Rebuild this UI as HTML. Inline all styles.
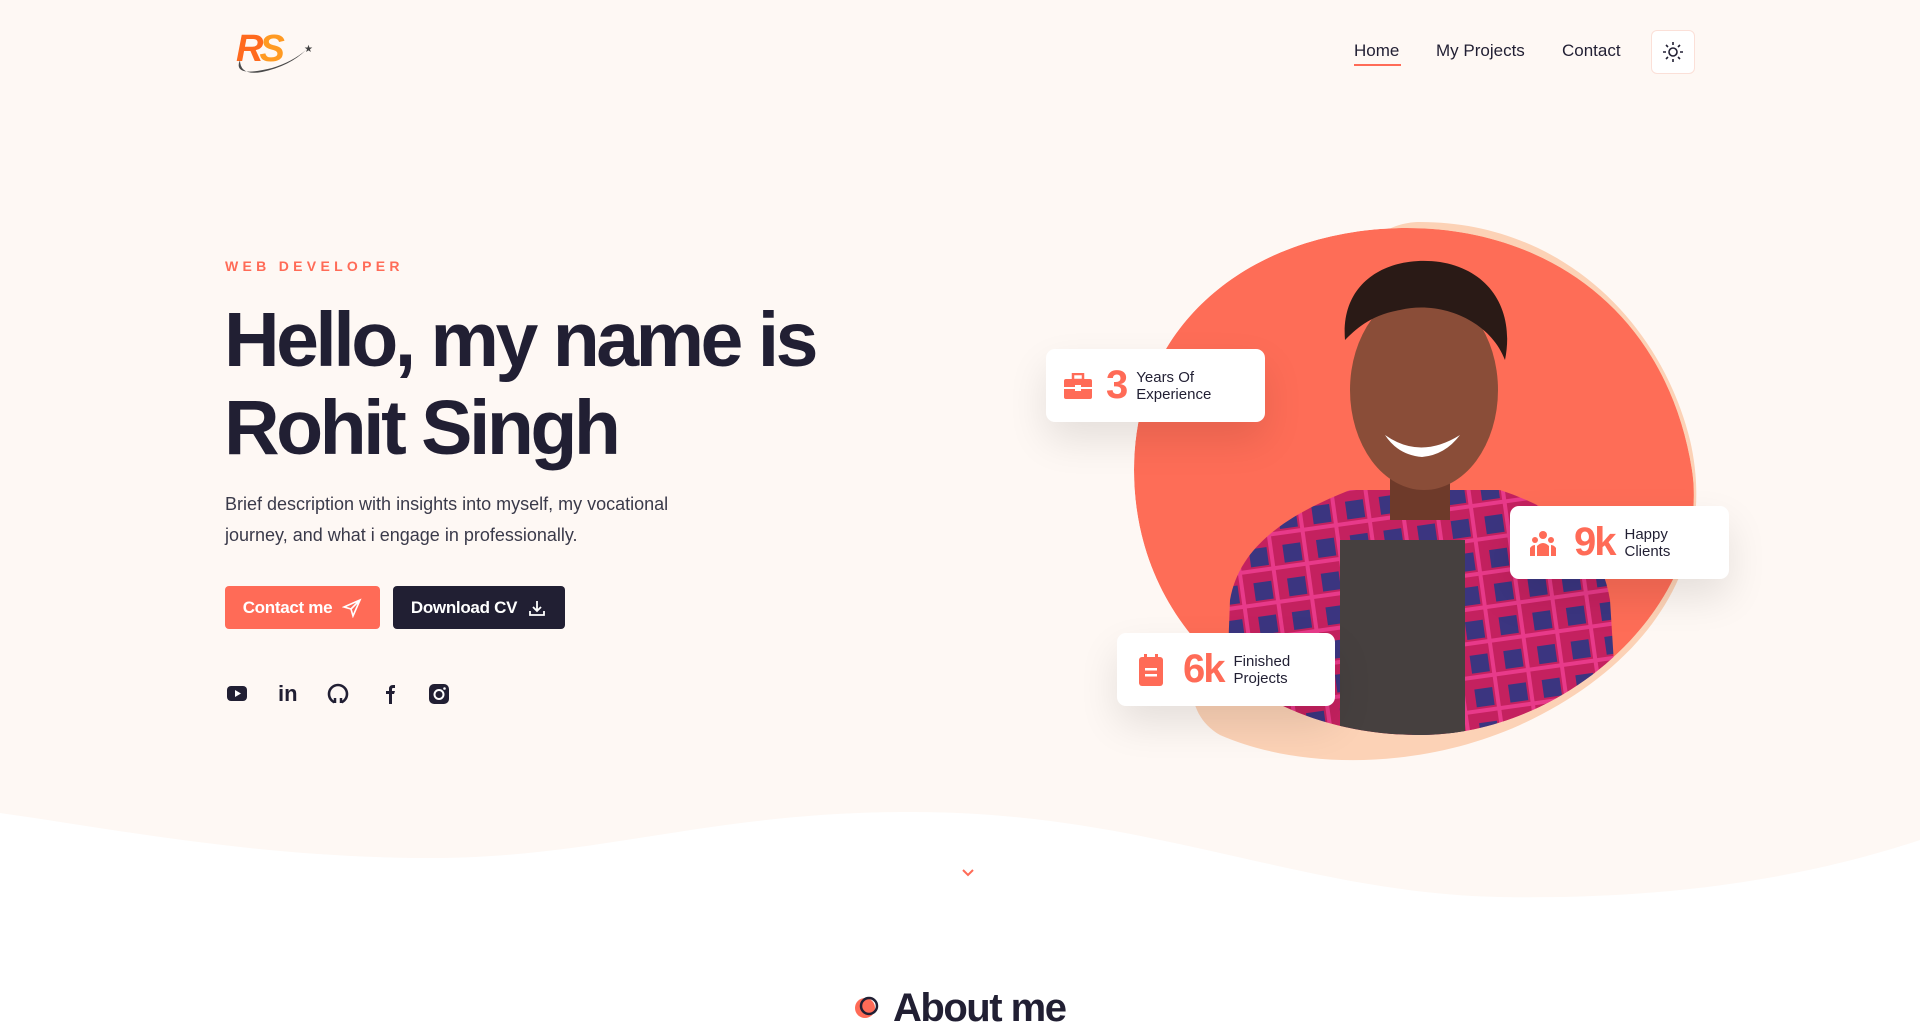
<!DOCTYPE html>
<html><head><meta charset="utf-8"><style>
*{margin:0;padding:0;box-sizing:border-box}
body{width:1920px;height:1024px;overflow:hidden;background:#fff;font-family:"Liberation Sans",sans-serif;color:#211f33;position:relative}
.abs{position:absolute}
.nav a{position:absolute;top:41px;font-size:17px;color:#211f33;text-decoration:none}
.card{position:absolute;background:#fff;border-radius:9px;box-shadow:0 18px 40px rgba(0,0,0,.10);display:flex;align-items:center}
.card .n{color:#ff6b57;font-size:40px;font-weight:bold;letter-spacing:-2px;margin-right:10px}
.card .t{font-size:15px;line-height:17px;color:#211f33}
.btn{position:absolute;top:586px;height:43px;border-radius:4px;color:#fff;font-size:17px;font-weight:bold;display:flex;align-items:center;justify-content:center;gap:10px;letter-spacing:-.3px}
</style></head><body>
<svg class="abs" style="left:0;top:0" width="1920" height="1024">
<path d="M0,0H1920V840C1800,880 1660,900 1500,897C1300,893 1150,812 912,812C700,812 600,860 416,858C250,856 120,830 0,813Z" fill="#fef8f4"/>
<path d="M1420,222C1560,222 1660,320 1690,440C1720,570 1640,670 1520,725C1420,770 1300,770 1220,735C1160,700 1200,600 1300,500C1300,380 1330,222 1420,222Z" fill="#fcd2b6"/>
<defs><clipPath id="bl"><path d="M1380,229C1530,218 1665,300 1692,470C1712,600 1570,735 1420,735C1250,735 1134,620 1134,470C1134,330 1240,240 1380,229Z"/></clipPath>
<pattern id="pl" width="34" height="34" patternUnits="userSpaceOnUse" patternTransform="rotate(-8)"><rect width="34" height="34" fill="#c4215f"/><rect x="4" y="4" width="18" height="18" fill="#3b3580"/><rect x="24" y="0" width="4" height="34" fill="#e83a8a"/><rect x="0" y="24" width="34" height="4" fill="#e83a8a"/></pattern></defs>
<g clip-path="url(#bl)">
<path d="M1380,229C1530,218 1665,300 1692,470C1712,600 1570,735 1420,735C1250,735 1134,620 1134,470C1134,330 1240,240 1380,229Z" fill="#fe6d57"/>
<path d="M1224,760L1230,600C1240,540 1300,510 1350,490L1500,490C1560,510 1600,540 1610,600L1620,760Z" fill="url(#pl)"/>
<path d="M1340,540L1465,540L1465,760L1340,760Z" fill="#46403f"/>
<rect x="1390" y="450" width="60" height="70" fill="#6e3a2a"/>
<ellipse cx="1424" cy="390" rx="74" ry="100" fill="#8a4d38"/>
<path d="M1345,340C1340,280 1390,255 1440,262C1490,270 1515,310 1505,360C1490,320 1440,300 1400,310C1370,315 1355,330 1345,340Z" fill="#2a1a16"/>
<path d="M1385,435Q1420,460 1460,435Q1445,455 1422,457Q1398,455 1385,435Z" fill="#fff"/>
</g>
<path d="M963,870l5,5l5,-5" stroke="#ff6b57" stroke-width="2" fill="none"/>
<circle cx="865" cy="1008" r="10" fill="#ff6b57"/><circle cx="869" cy="1006" r="8" fill="none" stroke="#211f33" stroke-width="2.5"/>
</svg>
<div class="abs" style="left:236px;top:28px;font-size:38px;font-weight:bold;font-style:italic;color:#ff6a1e;letter-spacing:-4px">R<span style="color:#ff9a22">S</span></div>
<svg class="abs" style="left:232px;top:40px" width="84" height="40"><path d="M8,20Q0,38 40,28Q60,22 74,10Q58,26 30,32Q8,36 8,20Z" fill="#4a4a4a"/><text x="72" y="12" font-size="10" fill="#444">★</text></svg>
<div class="nav">
<a style="left:1354px">Home</a><div class="abs" style="left:1354px;top:64px;width:47px;height:2px;background:#ff6b57"></div>
<a style="left:1436px">My Projects</a><a style="left:1562px">Contact</a>
</div>
<div class="abs" style="left:1651px;top:30px;width:44px;height:44px;border:1px solid #fbe0d8;border-radius:6px;background:#fff"></div>
<svg class="abs" style="left:1661px;top:40px" width="24" height="24"><circle cx="12" cy="12" r="4" fill="none" stroke="#211f33" stroke-width="1.6"/><g stroke="#211f33" stroke-width="1.6"><path d="M12 2v3M12 19v3M2 12h3M19 12h3M5 5l2 2M17 17l2 2M5 19l2-2M17 7l2-2"/></g></svg>

<div class="abs" style="left:225px;top:258px;font-size:14px;letter-spacing:4.3px;color:#ff6b57;font-weight:bold">WEB DEVELOPER</div>
<div class="abs" style="left:224px;top:296px;font-size:77px;line-height:88px;font-weight:bold;letter-spacing:-3.5px;color:#211f33">Hello, my name is<br>Rohit Singh</div>
<div class="abs" style="left:225px;top:489px;font-size:18px;line-height:31px;color:#3a3a4a;width:500px">Brief description with insights into myself, my vocational journey, and what i engage in professionally.</div>
<div class="btn" style="left:225px;width:155px;background:#ff6b57">Contact me <svg width="20" height="20"><path d="M18 2L2 9l7 2 2 7z M18 2L9 11" fill="none" stroke="#fff" stroke-width="1.6"/></svg></div>
<div class="btn" style="left:393px;width:172px;background:#211f33">Download CV <svg width="20" height="20"><path d="M10 3v10M6 9l4 4 4-4M3 13v4h14v-4" fill="none" stroke="#fff" stroke-width="1.8"/></svg></div>
<svg class="abs" style="left:226px;top:683px" width="230" height="22">
<rect x="1" y="3" width="20" height="15" rx="4" fill="#211f33"/><path d="M9 7l6 3.5-6 3.5z" fill="#fff"/>
<text x="52" y="18" font-size="22" font-weight="bold" fill="#211f33" font-family="Liberation Sans">in</text>
<circle cx="112" cy="11" r="9" fill="none" stroke="#211f33" stroke-width="2.6"/><rect x="108" y="14" width="8" height="8" fill="#fef8f4"/><path d="M109 20v-5M115 20v-5" stroke="#211f33" stroke-width="2.5"/>
<path d="M163 21v-10h-3v-3h3v-2q0-4 4-4h2v3h-2q-1 0-1 1v2h3l-1 3h-2v10z" fill="#211f33"/>
<rect x="203" y="1" width="20" height="20" rx="5" fill="#211f33"/><circle cx="213" cy="11.5" r="4.5" fill="none" stroke="#fff" stroke-width="2"/><circle cx="218.5" cy="5.5" r="1.3" fill="#fff"/>
</svg>

<div class="card" style="left:1046px;top:349px;width:219px;height:73px">
<svg style="margin:0 14px 0 18px" width="28" height="26"><rect x="0" y="6" width="28" height="20" rx="2" fill="#ff6b57"/><rect x="9" y="1" width="10" height="6" fill="none" stroke="#ff6b57" stroke-width="2.5"/><rect x="0" y="14" width="28" height="2" fill="#fff"/><rect x="11" y="12" width="6" height="6" fill="#fff"/></svg>
<span class="n">3</span><span class="t">Years Of<br>Experience</span></div>
<div class="card" style="left:1510px;top:506px;width:219px;height:73px">
<svg style="margin:0 18px 0 20px" width="26" height="26"><circle cx="13" cy="5" r="4" fill="#ff6b57"/><circle cx="5" cy="10" r="3" fill="#ff6b57"/><circle cx="21" cy="10" r="3" fill="#ff6b57"/><path d="M7 26v-10q6-6 12 0v10z M0 26v-8q2-3 5-3v11z M26 26v-8q-2-3-5-3v11z" fill="#ff6b57"/></svg>
<span class="n">9k</span><span class="t">Happy<br>Clients</span></div>
<div class="card" style="left:1117px;top:633px;width:218px;height:73px">
<svg style="margin:0 20px 0 22px" width="24" height="32"><rect x="0" y="3" width="24" height="29" rx="3" fill="#ff6b57"/><rect x="5" y="0" width="3" height="6" fill="#ff6b57"/><rect x="16" y="0" width="3" height="6" fill="#ff6b57"/><rect x="6" y="14" width="12" height="2.5" fill="#fff"/><rect x="6" y="20" width="12" height="2.5" fill="#fff"/></svg>
<span class="n">6k</span><span class="t">Finished<br>Projects</span></div>

<div class="abs" style="left:893px;top:986px;font-size:40px;font-weight:bold;letter-spacing:-1.5px;color:#211f33">About me</div>
</body></html>
